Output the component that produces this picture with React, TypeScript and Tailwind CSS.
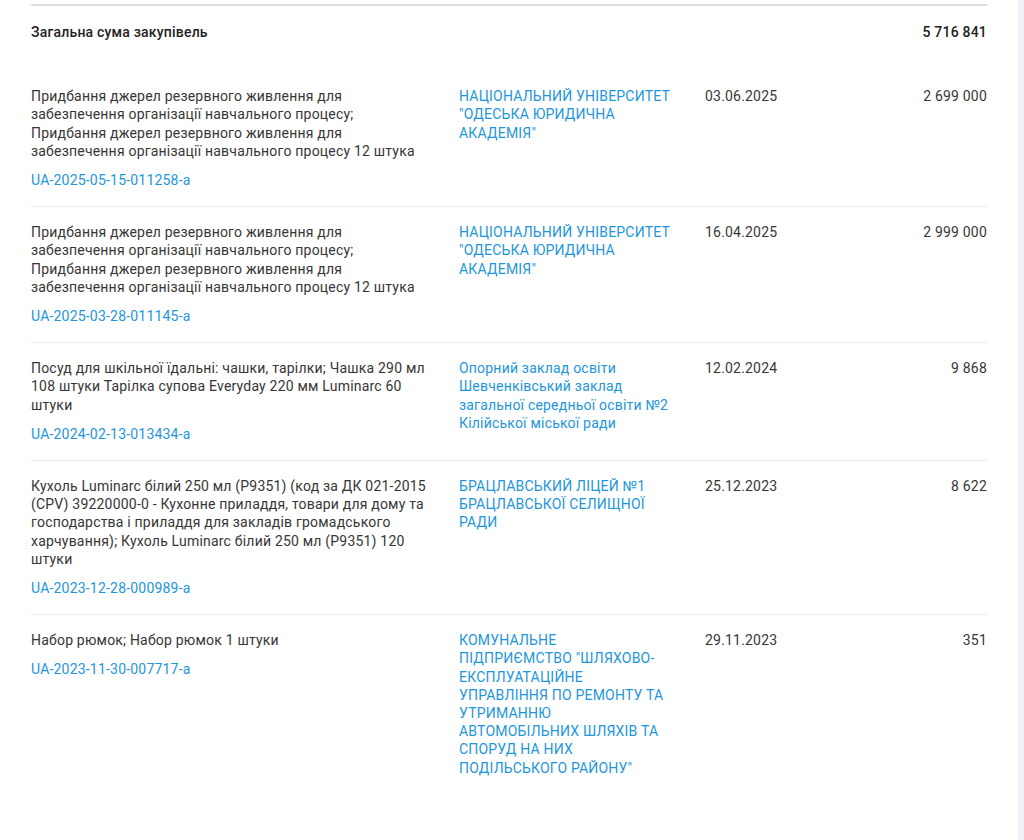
import React from "react";

type Row = {
  desc: string[];
  id: string;
  buyer: string[];
  date: string;
  amount: string;
};

const rows: Row[] = [
  {
    desc: [
      "Придбання джерел резервного живлення для",
      "забезпечення організації навчального процесу;",
      "Придбання джерел резервного живлення для",
      "забезпечення організації навчального процесу 12 штука",
    ],
    id: "UA-2025-05-15-011258-a",
    buyer: ["НАЦІОНАЛЬНИЙ УНІВЕРСИТЕТ", "\"ОДЕСЬКА ЮРИДИЧНА", "АКАДЕМІЯ\""],
    date: "03.06.2025",
    amount: "2 699 000",
  },
  {
    desc: [
      "Придбання джерел резервного живлення для",
      "забезпечення організації навчального процесу;",
      "Придбання джерел резервного живлення для",
      "забезпечення організації навчального процесу 12 штука",
    ],
    id: "UA-2025-03-28-011145-a",
    buyer: ["НАЦІОНАЛЬНИЙ УНІВЕРСИТЕТ", "\"ОДЕСЬКА ЮРИДИЧНА", "АКАДЕМІЯ\""],
    date: "16.04.2025",
    amount: "2 999 000",
  },
  {
    desc: [
      "Посуд для шкільної їдальні: чашки, тарілки; Чашка 290 мл",
      "108 штуки Тарілка супова Everyday 220 мм Luminarc 60",
      "штуки",
    ],
    id: "UA-2024-02-13-013434-a",
    buyer: [
      "Опорний заклад освіти",
      "Шевченківський заклад",
      "загальної середньої освіти №2",
      "Кілійської міської ради",
    ],
    date: "12.02.2024",
    amount: "9 868",
  },
  {
    desc: [
      "Кухоль Luminarc білий 250 мл (P9351) (код за ДК 021-2015",
      "(CPV) 39220000-0 - Кухонне приладдя, товари для дому та",
      "господарства і приладдя для закладів громадського",
      "харчування); Кухоль Luminarc білий 250 мл (P9351) 120",
      "штуки",
    ],
    id: "UA-2023-12-28-000989-a",
    buyer: ["БРАЦЛАВСЬКИЙ ЛІЦЕЙ №1", "БРАЦЛАВСЬКОЇ СЕЛИЩНОЇ", "РАДИ"],
    date: "25.12.2023",
    amount: "8 622",
  },
  {
    desc: ["Набор рюмок; Набор рюмок 1 штуки"],
    id: "UA-2023-11-30-007717-a",
    buyer: [
      "КОМУНАЛЬНЕ",
      "ПІДПРИЄМСТВО \"ШЛЯХОВО-",
      "ЕКСПЛУАТАЦІЙНЕ",
      "УПРАВЛІННЯ ПО РЕМОНТУ ТА",
      "УТРИМАННЮ",
      "АВТОМОБІЛЬНИХ ШЛЯХІВ ТА",
      "СПОРУД НА НИХ",
      "ПОДІЛЬСЬКОГО РАЙОНУ\"",
    ],
    date: "29.11.2023",
    amount: "351",
  },
];

export default function App() {
  return (
    <div
      className="min-h-[840px] w-full bg-[#eef1f6] text-[14px] leading-[18.2px] tracking-[0.2px] text-[#363636]"
      style={{ fontFamily: 'Roboto, "Liberation Sans", Arial, sans-serif' }}
    >
      <div className="min-h-[840px] w-[1018px] bg-white px-[31px] pt-[4px]">
        <div className="border-t-2 border-[#dedede]">
          <div className="flex justify-between pt-[17px] pb-[30px] font-medium text-[#222222]">
            <span>Загальна сума закупівель</span>
            <span>5 716 841</span>
          </div>
          {rows.map((r, i) => (
            <div
              key={r.id}
              className={
                "grid grid-cols-[396px_214px_1fr_auto] gap-x-8 pt-4 pb-[17px] " +
                (i === 0 ? "" : "border-t border-[#ececec]")
              }
            >
              <div>
                {r.desc.map((l, k) => (
                  <div key={k} className="whitespace-nowrap">
                    {l}
                  </div>
                ))}
                <div className="mt-[11px] text-[#1e96dc]">{r.id}</div>
              </div>
              <div className="text-[#1e96dc]">
                {r.buyer.map((l, k) => (
                  <div key={k} className="whitespace-nowrap">
                    {l}
                  </div>
                ))}
              </div>
              <div>{r.date}</div>
              <div className="text-right">{r.amount}</div>
            </div>
          ))}
        </div>
      </div>
    </div>
  );
}
